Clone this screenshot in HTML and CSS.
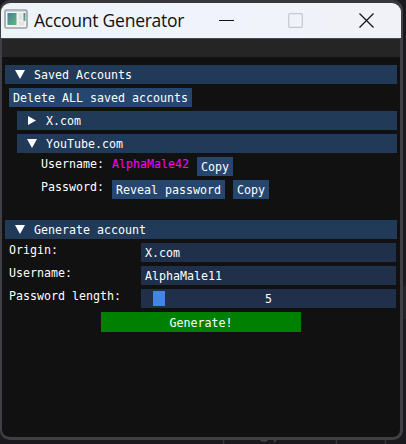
FILE: index.html
```html
<!DOCTYPE html>
<html lang="en">
<head>
<meta charset="utf-8">
<title>Account Generator</title>
<link rel="stylesheet" href="styles.css">
</head>
<body>
<svg class="backdrop" width="406" height="444" viewBox="0 0 406 444">
  <path d="M223.5 0v4M336.5 0v4M385.5 0v4M223.5 438v6M336.5 438v6M385.5 438v6" stroke="#333338" stroke-width="1.5"/>
  <path d="M260 437q0 4 4 4t4-4M278 437l-4 5M261 3l1-3h5M274 3l3-3" fill="none" stroke="#44454d" stroke-width="1.5"/>
  <path d="M403 286h3v33h-3z" fill="#222328"/>
</svg>
<main class="window">
  <header class="titlebar">
    <svg class="app-icon" width="24" height="20" viewBox="0 0 24 20">
      <defs><linearGradient id="g" x1="0" y1="0" x2="1" y2="1"><stop offset="0" stop-color="#477d9e"/><stop offset="1" stop-color="#64b87a"/></linearGradient></defs>
      <rect x="1" y="1" width="22" height="18" rx="1.5" fill="#f4f4f4" stroke="#9ca1a8" stroke-width="1.6"/>
      <path d="M2 2.5h20" stroke="#d3d7dc"/>
      <rect x="3.500" y="4" width="9" height="12" fill="url(#g)"/>
      <path d="M14.500 4h4v7h-4zM14.500 12.500h6v4h-6z" fill="#e5e3e2"/>
      <path d="M19.500 4h2v8h-2z" fill="url(#g)"/>
    </svg>
    <h1 class="title">Account Generator</h1>
    <svg class="controls" width="160" height="16" viewBox="0 0 160 16">
      <path d="M1 7.500h15" stroke="#111" stroke-width="1"/>
      <rect x="70.700" y="0.700" width="13.600" height="13.600" rx="1" fill="none" stroke="#c6c8cd" stroke-width="1.2"/>
      <path d="M141.500 0.500l14 14M155.500 0.500l-14 14" stroke="#15161a" stroke-width="1.3"/>
    </svg>
  </header>
  <div class="menubar"></div>
  <div class="content">
    <div class="tree"><svg class="arrow" width="10" height="9"><path d="M0 0h10L5 9z"/></svg><span class="name">Saved Accounts</span></div>
    <div class="actions"><button class="btn">Delete ALL saved accounts</button></div>
    <div class="tree nested"><svg class="arrow" width="10" height="9"><path d="M1 0v9l8-4.500z"/></svg><span class="name">X.com</span></div>
    <div class="tree nested"><svg class="arrow" width="10" height="9"><path d="M0 0h10L5 9z"/></svg><span class="name">YouTube.com</span></div>
    <div class="detail"><span class="key">Username:</span><span class="account">AlphaMale42</span><button class="btn">Copy</button></div>
    <div class="detail"><span class="key">Password:</span><button class="btn">Reveal password</button><button class="btn">Copy</button></div>
    <div class="tree section"><svg class="arrow" width="10" height="9"><path d="M0 0h10L5 9z"/></svg><span class="name">Generate account</span></div>
    <div class="form">
      <span class="label">Origin:</span><div class="field">X.com</div>
      <span class="label">Username:</span><div class="field">AlphaMale11</div>
      <span class="label">Password length:</span><div class="field slider"><i class="grab"></i>5</div>
    </div>
    <button class="btn generate">Generate!</button>
  </div>
</main>
</body>
</html>
```
FILE: styles.css
```css
* { box-sizing: border-box; }
body {
  margin: 0;
  width: 406px;
  height: 444px;
  overflow: hidden;
  background: #1a1a1e;
  font: 11.63px/19px "DejaVu Sans Mono", monospace;
  color: #fff;
}
.backdrop { position: absolute; left: 0; top: 0; }
.window {
  position: relative;
  width: 403px;
  height: 440px;
  background: #111;
  border: solid #404044;
  border-width: 3px 3px 3px 2px;
  border-top-color: #38383c;
  border-radius: 10px;
}
.titlebar {
  display: flex;
  align-items: center;
  height: 35px;
  margin: 0 -1px;
  padding-left: 3px;
  background: linear-gradient(90deg, #edf4f8, #f0f3fc 50%, #f1f2f7);
  border-radius: 9px 9px 0 0;
}
.app-icon { flex: none; margin-top: -3px; }
.title {
  width: 191px;
  margin: -2px 0 0 6px;
  font: 400 17.5px/24px "Open Sans", sans-serif;
  color: #111;
  white-space: nowrap;
  letter-spacing: -0.25px;
}
.controls { flex: none; margin-left: -7px; }
.menubar {
  height: 19px;
  background: #252525;
  border-top: 1px solid #424a50;
}
.content {
  display: flex;
  flex-direction: column;
  gap: 4px;
  padding: 8px 3px 0;
}
.tree {
  display: flex;
  align-items: center;
  height: 19px;
  padding-left: 10px;
  background: #203a58;
}
.nested { margin-left: 12px; }
.section { margin-top: 17px; }
.arrow { margin-right: 9px; fill: #fff; }
.name { line-height: 17px; padding-top: 2px; }
.btn {
  height: 19px;
  border: 0;
  padding: 2px 4px 0;
  background: #25466f;
  color: #fff;
  font: inherit;
  line-height: 17px;
  white-space: nowrap;
}
.actions { display: flex; padding-left: 4px; }
.detail { display: flex; gap: 8px; height: 19px; padding-left: 36px; }
.key { width: 63px; line-height: 15px; }
.account { width: 77px; line-height: 15px; color: #f0f; }
.form {
  display: grid;
  grid-template-columns: 132px 255px;
  grid-auto-rows: 19px;
  row-gap: 4px;
  padding-left: 4px;
}
.label { line-height: 15px; }
.field { padding: 2px 0 0 4px; line-height: 17px; background: #20304a; }
.slider { position: relative; padding-left: 0; text-align: center; }
.grab {
  position: absolute;
  left: 12px;
  top: 2px;
  width: 12px;
  height: 15px;
  background: #4086e2;
}
.generate { align-self: center; width: 200px; height: 20px; background: #008000; }
```
